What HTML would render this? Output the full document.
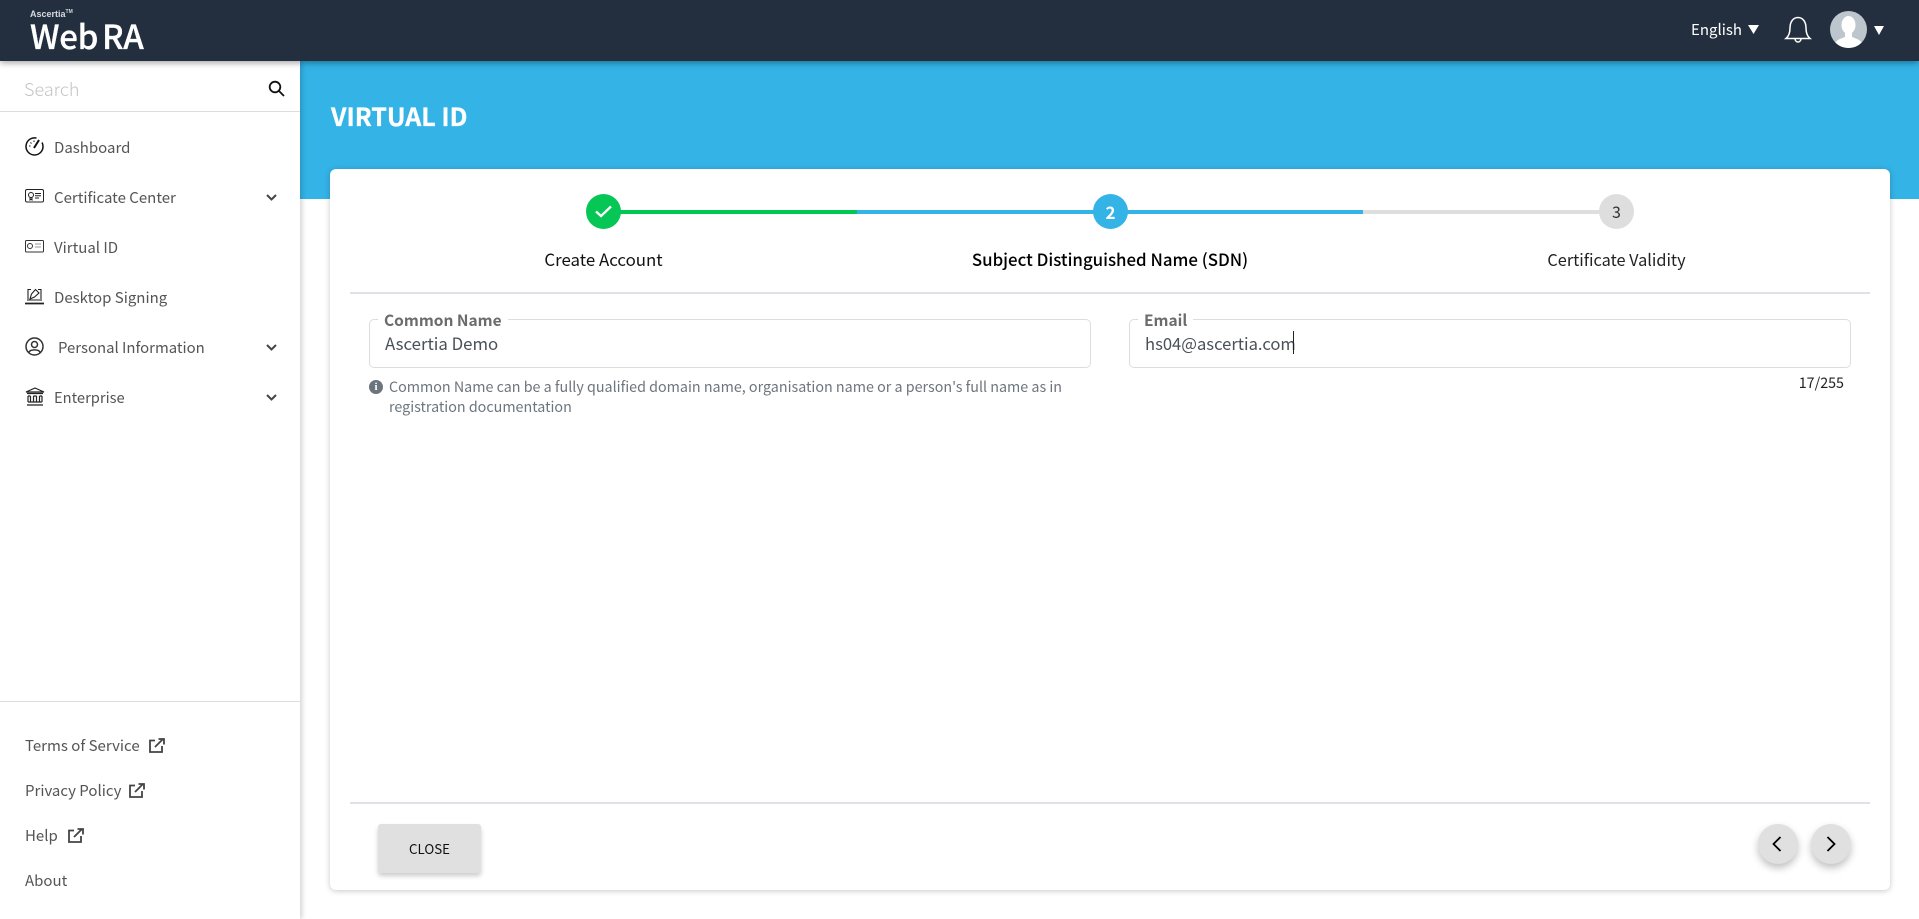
<!DOCTYPE html>
<html lang="en"><head><meta charset="utf-8"><title>WebRA</title>
<style>
html,body{margin:0;padding:0;width:1919px;height:919px;overflow:hidden;background:#fff;font-family:"Noto Sans CJK JP","Liberation Sans",sans-serif;}
.a{position:absolute;white-space:nowrap;line-height:1;}
.m{color:#555;font-size:15px;left:54px;}
.f{color:#555;font-size:15px;left:25px;}
svg{position:absolute;overflow:visible;}
</style></head><body>
<div class="a" style="left:0;top:0;width:1919px;height:61px;background:#232f3f;z-index:3;box-shadow:0 2px 6px rgba(0,0,0,.35)"></div>
<div class="a" style="left:300px;top:61px;width:1619px;height:138px;background:#33b3e6"></div>
<div class="a" style="left:0;top:61px;width:300px;height:858px;background:#fff;box-shadow:2px 0 5px rgba(0,0,0,.18);z-index:2"></div>
<div class="a" style="left:330px;top:169px;width:1560px;height:721px;background:#fff;border-radius:6px;box-shadow:0 1px 6px rgba(0,0,0,.22)"></div>

<div style="position:absolute;left:0;top:0;z-index:4;width:1919px;height:919px;">
<div class="a" style="left:30px;top:9px;font:bold 9px 'Liberation Sans',sans-serif;color:#d8dbe0;">Ascertia<span style="font-size:5px;vertical-align:top">TM</span></div>
<div class="a" style="left:30px;top:11px;font:500 33px 'Noto Sans CJK JP','Liberation Sans',sans-serif;color:#fff;letter-spacing:-.3px;-webkit-text-stroke:.3px #fff;">Web<span style="margin-left:4px">RA</span></div>
<div class="a" style="left:1691px;top:22px;color:#fff;font-size:15px;">English</div>
<svg style="left:1748px;top:25px" width="11" height="9"><path d="M0 0H11L5.500 9Z" fill="#fff"/></svg>
<svg style="left:1785px;top:16px" width="26" height="26" fill="none" stroke="#fff" stroke-width="1.500"><path d="M1 22.500C4 20 5 17 5 12C5 6 8 1.500 13 1.500S21 6 21 12C21 17 22 20 25 22.500ZM10 23C10.500 27 15.500 27 16 23"/></svg>
<svg style="left:1830px;top:11px" width="37" height="37" viewBox="0 0 37 37"><defs><clipPath id="c"><circle cx="18.500" cy="18.500" r="18.500"/></clipPath></defs><circle cx="18.500" cy="18.500" r="18.500" fill="#bcc6cc"/><g clip-path="url(#c)" fill="#fff"><ellipse cx="18.500" cy="14" rx="7" ry="9"/><path d="M4 37C4 29 10 28 15 26L15 20H22V26C27 28 33 29 33 37Z"/></g></svg>
<svg style="left:1874px;top:26px" width="10" height="9"><path d="M0 0H10L5 9Z" fill="#fff"/></svg>

<div class="a" style="left:24px;top:80px;font-size:18px;color:#c4c4c4;font-weight:300;">Search</div>
<svg style="left:268px;top:80px" width="17" height="17" fill="none" stroke="#111" stroke-width="1.800"><circle cx="7" cy="7" r="5.300"/><path d="M11 11L16 16"/></svg>
<div class="a" style="left:0;top:111px;width:300px;height:1px;background:#ddd"></div>

<svg style="left:25px;top:137px" width="19" height="19" fill="none" stroke="#111" stroke-width="1.500"><path d="M11.500 1C5 0 1 4.500 1 9.500A8.500 8.500 0 0 0 18 9.500C18 8 17.600 6.500 17 5.500"/><path d="M9 11L14 3" stroke-width="2"/><path d="M4 9H5.500M5.500 5.500L6.500 6.500M9 3.500V5" stroke-width="1"/></svg>
<div class="a m" style="top:140px">Dashboard</div>

<svg style="left:25px;top:189px" width="19" height="14" fill="none" stroke="#222" stroke-width="1"><rect x=".5" y=".5" width="18" height="12.500" rx="1.500"/><circle cx="6" cy="6" r="2.500"/><path d="M5 8.500V11L6 10.200L7 11V8.500M10 4.500H16M10 6.800H16M10 9H14"/></svg>
<div class="a m" style="top:190px">Certificate Center</div>
<svg style="left:266px;top:194px" width="11" height="8" fill="none" stroke="#444" stroke-width="2"><path d="M1 1L5.500 5.500L10 1"/></svg>

<svg style="left:25px;top:240px" width="19" height="13" fill="none" stroke="#333" stroke-width="1"><rect x=".5" y=".5" width="18" height="11.500" rx="1"/><circle cx="5" cy="6" r="2.500"/><path d="M10 4H16M10 7H16" stroke="#999"/></svg>
<div class="a m" style="top:240px">Virtual ID</div>

<svg style="left:25px;top:288px" width="19" height="17" fill="none" stroke="#222" stroke-width="1.100"><path d="M3 13V1.500H6M13 1.500H16V13"/><path d="M5 11L6.500 6L10.500 1.500L14 5L9.500 9ZM4 12H15"/><path d="M0 15.500H19" stroke-width="1.800"/></svg>
<div class="a m" style="top:290px">Desktop Signing</div>

<svg style="left:25px;top:337px" width="19" height="19" fill="none" stroke="#333" stroke-width="1.500"><circle cx="9.500" cy="9.500" r="8.500"/><circle cx="9.500" cy="7.500" r="3"/><path d="M3.800 15.500C5 12 14 12 15.200 15.500"/></svg>
<div class="a m" style="top:341px;left:58px;font-size:14.900px">Personal Information</div>
<svg style="left:266px;top:344px" width="11" height="8" fill="none" stroke="#444" stroke-width="2"><path d="M1 1L5.500 5.500L10 1"/></svg>

<svg style="left:26px;top:387px" width="18" height="19" fill="none" stroke="#222" stroke-width="1.200"><path d="M0 5L9 1L18 5ZM1 6.500H17"/><path d="M2 9V15M4.500 9V15M7.500 9V15M10.500 9V15M13.500 9V15M16 9V15M2 9H4.500M7.500 9H10.500M13.500 9H16M2 15H16M1 18H17" /></svg>
<div class="a m" style="top:391px;font-size:14.700px">Enterprise</div>
<svg style="left:266px;top:394px" width="11" height="8" fill="none" stroke="#444" stroke-width="2"><path d="M1 1L5.500 5.500L10 1"/></svg>

<div class="a" style="left:0;top:701px;width:300px;height:1px;background:#ddd"></div>
<div class="a f" style="top:738px">Terms of Service</div>
<div class="a f" style="top:783px">Privacy Policy</div>
<div class="a f" style="top:828px">Help</div>
<div class="a f" style="top:873px">About</div>
<svg style="left:149px;top:738px" width="16" height="15" fill="none" stroke="#444" stroke-width="1.800"><path d="M6 2.500H1V14H13V8"/><path d="M6 9L14 1M9.500 1H15V6.500"/></svg>
<svg style="left:129px;top:783px" width="16" height="15" fill="none" stroke="#444" stroke-width="1.800"><path d="M6 2.500H1V14H13V8"/><path d="M6 9L14 1M9.500 1H15V6.500"/></svg>
<svg style="left:68px;top:828px" width="16" height="15" fill="none" stroke="#444" stroke-width="1.800"><path d="M6 2.500H1V14H13V8"/><path d="M6 9L14 1M9.500 1H15V6.500"/></svg>

<div class="a" style="left:331px;top:104px;font-size:25px;font-weight:700;color:#fff;-webkit-text-stroke:.3px #fff">VIRTUAL ID</div>

<!-- stepper -->
<div class="a" style="left:603px;top:210px;width:254px;height:4px;background:#00c853"></div>
<div class="a" style="left:857px;top:210px;width:506px;height:4px;background:#33b3e6"></div>
<div class="a" style="left:1363px;top:210px;width:253px;height:4px;background:#dedede"></div>
<div class="a" style="left:586px;top:194px;width:35px;height:35px;border-radius:50%;background:#06c755"></div>
<svg style="left:595px;top:205px" width="17" height="13" fill="none" stroke="#fff" stroke-width="2.300"><path d="M1 6.500L6 11L16 1.500"/></svg>
<div class="a" style="left:1093px;top:194px;width:35px;height:35px;border-radius:50%;background:#33b3e6;color:#fff;font-size:17px;font-weight:700;text-align:center;line-height:35px">2</div>
<div class="a" style="left:1599px;top:194px;width:35px;height:35px;border-radius:50%;background:#dedede;color:#333;font-size:16px;text-align:center;line-height:35px">3</div>
<div class="a" style="left:503.500px;top:251px;width:200px;text-align:center;font-size:16.850px;color:#111">Create Account</div>
<div class="a" style="left:910px;top:251px;width:400px;text-align:center;font-size:16.850px;font-weight:500;color:#000">Subject Distinguished Name (SDN)</div>
<div class="a" style="left:1516.500px;top:251px;width:200px;text-align:center;font-size:16.300px;color:#222">Certificate Validity</div>
<div class="a" style="left:350px;top:292px;width:1520px;height:2px;background:#dee2e6"></div>

<!-- fields -->
<div class="a" style="left:369px;top:319px;width:720px;height:47px;border:1.500px solid #ddd;border-radius:5px"></div>
<div class="a" style="left:378px;top:312px;background:#fff;padding:0 6px;font-size:15.500px;font-weight:700;color:#6b6b6b;line-height:17px">Common Name</div>
<div class="a" style="left:385px;top:335px;font-size:16.800px;color:#495057">Ascertia Demo</div>
<div class="a" style="left:369px;top:380px;width:14px;height:14px;border-radius:50%;background:#6c757d;color:#fff;font:bold 11px/14px 'Liberation Serif',serif;text-align:center">i</div>
<div class="a" style="left:389px;top:380px;font-size:14.300px;color:#6c757d">Common Name can be a fully qualified domain name, organisation name or a person's full name as in</div>
<div class="a" style="left:389px;top:400px;font-size:14.300px;color:#6c757d">registration documentation</div>

<div class="a" style="left:1129px;top:319px;width:720px;height:47px;border:1.500px solid #ddd;border-radius:5px"></div>
<div class="a" style="left:1138px;top:312px;background:#fff;padding:0 6px;font-size:15.500px;font-weight:700;color:#6b6b6b;line-height:17px">Email</div>
<div class="a" style="left:1145px;top:335px;font-size:16.600px;color:#495057">hs04@ascertia.com</div>
<div class="a" style="left:1293px;top:331px;width:1px;height:23px;background:#222"></div>
<div class="a" style="left:1744px;top:376px;width:100px;text-align:right;font-size:14.300px;color:#222">17/255</div>

<div class="a" style="left:350px;top:802px;width:1520px;height:2px;background:#dee2e6"></div>
<div class="a" style="left:378px;top:824px;width:103px;height:49px;border-radius:3px;background:#e0e0e0;box-shadow:0 3px 5px rgba(0,0,0,.2);color:#111;font-size:13.300px;text-align:center;line-height:49px">CLOSE</div>
<div class="a" style="left:1758px;top:824px;width:40px;height:40px;border-radius:50%;background:#e0e0e0;box-shadow:0 4px 8px rgba(0,0,0,.25)"></div>
<div class="a" style="left:1811px;top:824px;width:40px;height:40px;border-radius:50%;background:#e0e0e0;box-shadow:0 4px 8px rgba(0,0,0,.25)"></div>
<svg style="left:1772px;top:836px" width="10" height="16" fill="none" stroke="#000" stroke-width="1.800"><path d="M8.500 1L1.500 8L8.500 15"/></svg>
<svg style="left:1826px;top:836px" width="10" height="16" fill="none" stroke="#000" stroke-width="1.800"><path d="M1.500 1L8.500 8L1.500 15"/></svg>
</div>
</body></html>
